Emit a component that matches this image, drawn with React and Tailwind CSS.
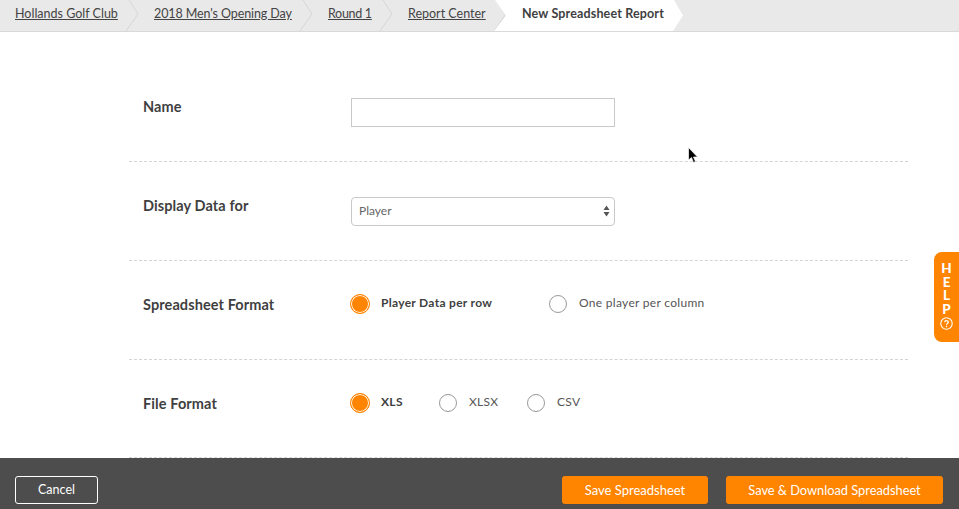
import React from 'react';

const crumbs = [
  { label: 'Hollands Golf Club', className: 'w-[103px]' },
  { label: "2018 Men's Opening Day", className: 'w-[138px] tracking-[-0.1px]' },
  { label: 'Round 1', className: 'w-[44px] tracking-[-0.3px]' },
  { label: 'Report Center', className: 'w-[78px]' },
];

const Radio = ({ checked }) =>
  checked ? (
    <span className="w-5 h-5 shrink-0 rounded-full border border-[#ff8400] bg-[#ff8400] shadow-[inset_0_0_0_1px_#fff]" />
  ) : (
    <span className="w-[18px] h-[18px] mx-px shrink-0 rounded-full border border-[#9a9a9a] bg-white" />
  );

const Option = ({ checked, label, width }) => (
  <div className={`flex items-center ${width}`}>
    <Radio checked={checked} />
    <span className={`ml-[11px] -mt-0.5 text-xs tracking-[0.3px] ${checked ? 'font-bold text-[#3f3f3f]' : 'text-[#555]'}`}>
      {label}
    </span>
  </div>
);

const Row = ({ label, children, height = 'h-[99px]', controlClass = 'mt-px' }) => (
  <div className={`flex items-center ${height} border-b border-dashed border-[#d4d4d4]`}>
    <div className="w-[222px] pl-[14px] pr-2 -mt-[10px] text-[14.5px] font-bold text-[#3f3f3f] tracking-[0.1px]">{label}</div>
    <div className={`flex items-center ${controlClass}`}>{children}</div>
  </div>
);

const App = () => {
  return (
    <div className="relative flex flex-col w-[959px] h-[509px] overflow-hidden bg-white font-['Lato',sans-serif]">
      {/* Breadcrumbs */}
      <div className="flex h-8 shrink-0 pl-[15px] bg-[#e9e9e9] border-b border-[#d9d9d9]">
        {crumbs.map((crumb) => (
          <div key={crumb.label} className="flex">
            <a className={`leading-[27px] text-[12.5px] text-[#444] underline whitespace-nowrap ${crumb.className}`}>{crumb.label}</a>
            <svg width="36" height="31" className="shrink-0">
              <path d="M11 0 L20 14 L8 31" fill="none" stroke="#d6d6d6" />
            </svg>
          </div>
        ))}
        <div className="h-[31px] w-[189px] -ml-7 pl-7 leading-[27px] text-[12.5px] font-bold tracking-[0.15px] text-[#3f3f3f] bg-white whitespace-nowrap [clip-path:polygon(0_100%,12px_50%,1px_0,180px_0,189px_50%,179px_100%)]">
          New Spreadsheet Report
        </div>
      </div>

      {/* Form */}
      <div className="flex-1 min-h-0 pl-[129px] pr-[51px]">
        <div className="pt-[31px]">
          <Row label="Name">
            <input type="text" className="w-[264px] h-[29px] border border-[#c9c9c9] bg-white" />
          </Row>
          <Row label="Display Data for">
            <div className="flex items-center justify-between w-[264px] h-[29px] pl-[7px] pr-1 pb-0.5 border border-[#c9c9c9] rounded text-xs text-[#666]">
              <span>Player</span>
              <svg width="7" height="12" viewBox="0 0 7 12" fill="#555">
                <path d="M3.5 0.5 L6.5 5 H0.5 Z M0.5 7 H6.5 L3.5 11.5 Z" />
              </svg>
            </div>
          </Row>
          <Row label="Spreadsheet Format" controlClass="-ml-px -mt-[12px]">
            <Option checked label="Player Data per row" width="w-[198px]" />
            <Option label="One player per column" />
          </Row>
          <Row label="File Format" height="h-[98px]" controlClass="-ml-px -mt-[11px]">
            <Option checked label="XLS" width="w-[88px]" />
            <Option label="XLSX" width="w-[88px]" />
            <Option label="CSV" />
          </Row>
        </div>
      </div>

      {/* Footer */}
      <div className="flex items-start justify-between h-[51px] shrink-0 pt-[18px] pl-[15px] pr-4 bg-[#4d4d4d]">
        <button className="w-[83px] h-7 pt-px border border-white rounded-[3px] text-[12.5px] text-white">Cancel</button>
        <div className="flex gap-[18px]">
          <button className="w-[146px] h-7 pt-px rounded-[3px] bg-[#ff8400] text-[13px] text-white">Save Spreadsheet</button>
          <button className="w-[217px] h-7 pt-px rounded-[3px] bg-[#ff8400] text-[12.8px] text-white">Save &amp; Download Spreadsheet</button>
        </div>
      </div>

      {/* Help tab */}
      <div className="absolute right-0 top-[252px] flex flex-col items-center w-[25px] h-[90px] pt-[10px] rounded-l-lg bg-[#ff8400] text-white text-[13.5px] font-black leading-[13.5px]">
        <span>H</span>
        <span>E</span>
        <span>L</span>
        <span>P</span>
        <svg width="13" height="13" viewBox="0 0 13 13" fill="none" stroke="#fff" className="mt-px">
          <circle cx="6.5" cy="6.5" r="5.7" strokeWidth="1.1" />
          <path d="M4.7 5.2 C4.7 3 8.3 3 8.3 5.1 C8.3 6.5 6.5 6.4 6.5 7.8" strokeWidth="1.3" />
          <path d="M6.5 8.8 V10.2" strokeWidth="1.3" />
        </svg>
      </div>

      {/* Mouse pointer */}
      <svg width="12" height="18" viewBox="0 0 12 18" className="absolute left-[688px] top-[147px]">
        <path d="M0.5 0.5 V13 L3.5 10.5 L5.5 15.5 L7.5 14.5 L5.5 10 H9.5 Z" fill="#000" stroke="#fff" strokeWidth="0.7" />
      </svg>
    </div>
  );
};

export default App;
